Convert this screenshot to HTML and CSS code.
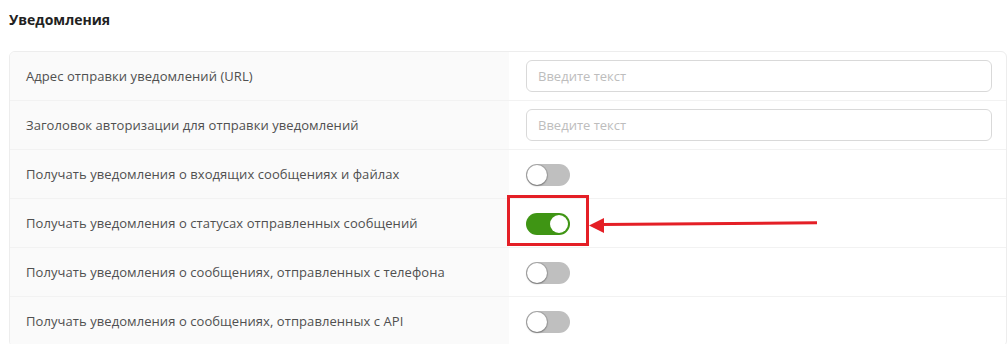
FILE: index.html
```html
<!DOCTYPE html>
<html lang="ru">
<head>
<meta charset="utf-8">
<title>Уведомления</title>
<link rel="stylesheet" href="styles.css">
</head>
<body>
<div class="page">
  <h2 class="title">Уведомления</h2>
  <div class="card">
    <div class="row">
      <div class="label">Адрес отправки уведомлений (URL)</div>
      <div class="control"><input class="input" type="text" placeholder="Введите текст"></div>
    </div>
    <div class="row">
      <div class="label">Заголовок авторизации для отправки уведомлений</div>
      <div class="control"><input class="input" type="text" placeholder="Введите текст"></div>
    </div>
    <div class="row">
      <div class="label">Получать уведомления о входящих сообщениях и файлах</div>
      <div class="control"><span class="switch"><span class="knob"></span></span></div>
    </div>
    <div class="row">
      <div class="label">Получать уведомления о статусах отправленных сообщений</div>
      <div class="control"><span class="switch on"><span class="knob"></span></span></div>
    </div>
    <div class="row">
      <div class="label">Получать уведомления о сообщениях, отправленных с телефона</div>
      <div class="control"><span class="switch"><span class="knob"></span></span></div>
    </div>
    <div class="row">
      <div class="label">Получать уведомления о сообщениях, отправленных с API</div>
      <div class="control"><span class="switch"><span class="knob"></span></span></div>
    </div>
  </div>
  <div class="highlight"></div>
  <svg class="arrow" width="1008" height="344" viewBox="0 0 1008 344">
    <line x1="602" y1="224.6" x2="817" y2="222.8" stroke="#e41f26" stroke-width="3"/>
    <polygon points="589,225.5 604,218 604,233" fill="#e41f26"/>
  </svg>
</div>
</body>
</html>
```

FILE: styles.css
```css
* { box-sizing: border-box; }
html, body { margin: 0; padding: 0; background: #fff; }
body {
  font-family: "Open Sans", "Noto Sans", sans-serif;
  color: #555;
  width: 1008px;
  height: 344px;
  overflow: hidden;
}
.page {
  position: relative;
  padding: 8px 1px 0 9px;
}
.title {
  margin: 0 0 20px 0;
  font-size: 14px;
  line-height: 23px;
  font-weight: 700;
  color: #222;
}
.card {
  border: 1px solid #ededed;
  border-radius: 6px;
  overflow: hidden;
  background: #fff;
}
.row {
  display: grid;
  grid-template-columns: 499px 1fr;
  height: 49px;
  border-bottom: 1px solid #f2f2f2;
}
.label {
  background: #fafafa;
  padding: 0 16px;
  display: flex;
  align-items: center;
  font-size: 13px;
  color: #505050;
  letter-spacing: 0.07px;
}
.control {
  display: flex;
  align-items: center;
  padding: 0 14px 0 17px;
}
.input {
  width: 100%;
  height: 32px;
  border: 1px solid #d9d9d9;
  border-radius: 6px;
  padding: 0 11px;
  font-family: inherit;
  font-size: 13px;
  color: #333;
  background: #fff;
  outline: none;
}
.input::placeholder { color: #bdbdbd; }
.switch {
  position: relative;
  display: inline-block;
  width: 44px;
  height: 22px;
  margin-top: 2px;
  border-radius: 11px;
  background: #bfbfbf;
}
.knob {
  position: absolute;
  top: 1px;
  left: 1px;
  width: 20px;
  height: 20px;
  border-radius: 50%;
  background: #fff;
  box-shadow: 0 0 0 1px rgba(0,0,0,0.12), 0 1px 2px rgba(0,0,0,0.3);
}
.switch.on { background: #3f9514; }
.switch.on .knob {
  left: 24px;
  top: 2px;
  width: 18px;
  height: 18px;
  box-shadow: none;
}
.highlight {
  position: absolute;
  left: 507px;
  top: 195px;
  width: 82px;
  height: 51px;
  border: 3px solid #e41f26;
}
.arrow {
  position: absolute;
  left: 0;
  top: 0;
  pointer-events: none;
}
```
